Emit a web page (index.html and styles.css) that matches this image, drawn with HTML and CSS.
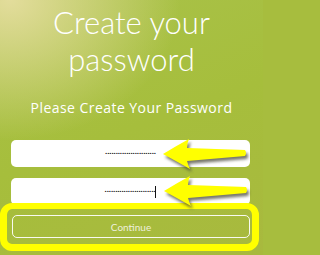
FILE: index.html
```html
<!DOCTYPE html>
<html>
<head>
<meta charset="utf-8">
<link rel="stylesheet" href="styles.css">
</head>
<body>
<div class="page">
  <h1 class="title">Create your<br>password</h1>
  <p class="subtitle">Please Create Your Password</p>
  <div class="form">
    <div class="field"><span class="dots">........................</span></div>
    <div class="field"><span class="dots">........................</span><span class="caret"></span></div>
    <div class="btn">Continue</div>
  </div>
  <div class="highlight"></div>
  <svg class="arrows" width="263" height="255" viewBox="0 0 263 255">
    <defs>
      <filter id="sh" x="-20%" y="-40%" width="140%" height="180%">
        <feGaussianBlur stdDeviation="1.4"/>
      </filter>
      <path id="arr" d="M163 154 Q176 146 189 139 Q187 143 187 148 L245 150 Q247 153 245 156 L187 161 Q188 165 190 169 Q176 161 163 154 Z"/>
    </defs>
    <g>
      <use href="#arr" transform="translate(2 3)" fill="#4a4a3a" opacity="0.75" filter="url(#sh)"/>
      <use href="#arr" fill="#ffff00"/>
    </g>
    <g transform="translate(1 37)">
      <use href="#arr" transform="translate(2 3)" fill="#4a4a3a" opacity="0.75" filter="url(#sh)"/>
      <use href="#arr" fill="#ffff00"/>
    </g>
  </svg>
</div>
</body>
</html>
```
FILE: styles.css
```css
html, body {
  margin: 0;
  padding: 0;
  background: #a7bd3e;
}
body {
  width: 263px;
  height: 255px;
  overflow: hidden;
}
.page {
  position: relative;
  width: 263px;
  height: 255px;
  box-sizing: border-box;
  padding-top: 4px;
  background:
    radial-gradient(ellipse 170px 140px at 10px 0px, rgba(230, 222, 160, 0.95), rgba(230, 222, 160, 0) 100%),
    linear-gradient(160deg, #a9c24a 0%, #a6be3c 50%, #a8b93e 100%);
  font-family: Lato, "Open Sans", sans-serif;
  color: #fff;
}
.title {
  margin: 0;
  font-size: 31px;
  line-height: 37px;
  font-weight: 300;
  text-align: center;
}
.subtitle {
  margin: 21px 0 0;
  font-family: "Open Sans", sans-serif;
  font-size: 14px;
  letter-spacing: 0.45px;
  line-height: 17px;
  font-weight: 400;
  text-align: center;
}
.form {
  display: flex;
  flex-direction: column;
  margin: 24px 13px 0 11px;
}
.field {
  height: 27px;
  background: #fff;
  border-radius: 5px;
  display: flex;
  align-items: center;
  justify-content: center;
  margin-bottom: 11px;
}
.field + .field {
  margin-bottom: 10px;
}
.dots {
  font-family: "Liberation Sans", sans-serif;
  font-size: 8px;
  font-weight: 700;
  color: #111;
  letter-spacing: -0.1px;
  line-height: 10px;
  position: relative;
  top: -2px;
}
.caret {
  width: 1px;
  height: 12px;
  background: #111;
}
.btn {
  height: 21px;
  margin-left: 1px;
  border: 1px solid rgba(255, 255, 255, 0.92);
  border-radius: 5px;
  display: flex;
  align-items: center;
  justify-content: center;
  font-size: 10px;
  color: #eef0dc;
}
.highlight {
  position: absolute;
  left: 0;
  top: 203px;
  width: 259px;
  height: 48px;
  box-sizing: border-box;
  border: 7px solid #ffff00;
  border-top-width: 6px;
  border-radius: 12px;
}
.arrows {
  position: absolute;
  left: 0;
  top: 0;
}
```
